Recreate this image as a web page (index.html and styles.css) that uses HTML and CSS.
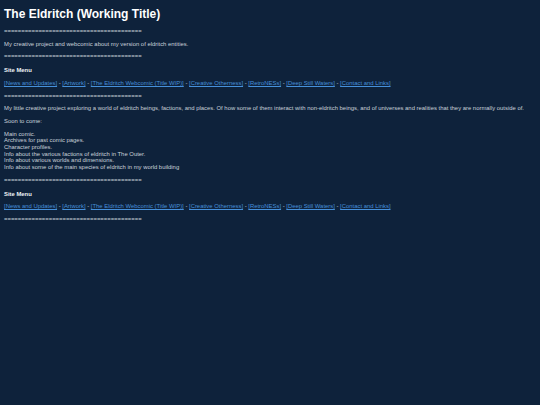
FILE: index.html
```html
<!DOCTYPE html>
<html lang="en">
<head>
    <meta charset="UTF-8">
    <meta name="viewport" content="width=device-width, initial-scale=1.0">
    <title>The Eldritch (Working Title)</title>
    <link rel="stylesheet" href="styles.css">
</head>
<body>
    <div class="page">
        <h1>The Eldritch (Working Title)</h1>
        <p class="rule">========================================</p>
        <p>My creative project and webcomic about my version of eldritch entities.</p>
        <p class="rule">========================================</p>

        <h4>Site Menu</h4>
        <p class="menu">
            <a href="#">[News and Updates]</a> - <a href="#">[Artwork]</a> - <a href="#">[The Eldritch Webcomic (Title WIP)]</a> - <a href="#">[Creative Otherness]</a> - <a href="#">[RetroNESs]</a> - <a href="#">[Deep Still Waters]</a> - <a href="#">[Contact and Links]</a>
        </p>
        <p class="rule">========================================</p>

        <p>My little creative project exploring a world of eldritch beings, factions, and places. Of how some of them interact with non-eldritch beings, and of universes and realities that they are normally outside of.</p>
        <p>Soon to come:</p>
        <p>
            Main comic.<br>
            Archives for past comic pages.<br>
            Character profiles.<br>
            Info about the various factions of eldritch in The Outer.<br>
            Info about various worlds and dimensions.<br>
            Info about some of the main species of eldritch in my world building
        </p>
        <p class="rule">========================================</p>

        <h4>Site Menu</h4>
        <p class="menu">
            <a href="#">[News and Updates]</a> - <a href="#">[Artwork]</a> - <a href="#">[The Eldritch Webcomic (Title WIP)]</a> - <a href="#">[Creative Otherness]</a> - <a href="#">[RetroNESs]</a> - <a href="#">[Deep Still Waters]</a> - <a href="#">[Contact and Links]</a>
        </p>
        <p class="rule">========================================</p>
    </div>
</body>
</html>
```

FILE: styles.css
```css
html, body {
    height: 100%;
}

body {
    margin: 0;
    background: #0e223b;
    color: #c9d1da;
    font-family: "Liberation Sans", Arial, sans-serif;
    font-size: 5.9px;
    line-height: 6.7px;
}

.page {
    padding: 0 4px;
}

h1 {
    font-size: 12px;
    line-height: 14px;
    font-weight: bold;
    color: #ffffff;
    margin: 7px 0 7px;
}

h4 {
    font-size: 5.9px;
    font-weight: bold;
    color: #eef2f6;
    margin: 7px 0 6px;
}

p {
    margin: 6px 0;
}

a {
    color: #4690da;
    text-decoration: underline;
}
```
